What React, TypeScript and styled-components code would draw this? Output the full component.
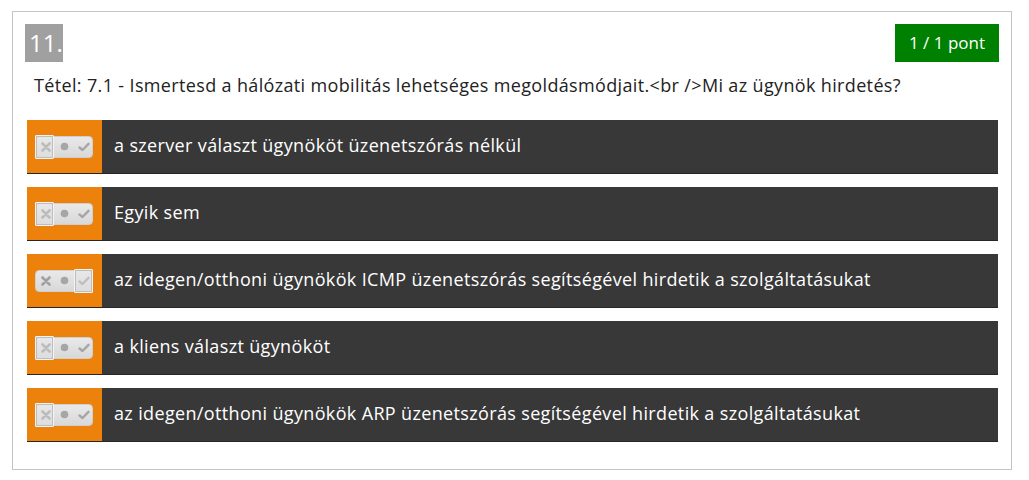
import React from "react";
import styled, { createGlobalStyle } from "styled-components";

const Global = createGlobalStyle`
  html, body { margin: 0; padding: 0; background: #fff; }
  body { font-family: "Open Sans", "Noto Sans", sans-serif; }
`;

const Page = styled.div`
  padding: 11px 17px 0 12px;
`;

const Card = styled.div`
  border: 1px solid #c4c4c4;
  width: 1000px;
  height: 459px;
  box-sizing: border-box;
  padding: 12px 12px 0 12px;
`;

const Header = styled.div`
  display: flex;
  justify-content: space-between;
  align-items: flex-start;
  height: 38px;
`;

const Number = styled.div`
  background: #a0a0a0;
  color: #fff;
  font-size: 24px;
  line-height: 38px;
  height: 38px;
  padding: 0 4px 0 4px;
  box-sizing: border-box;
  width: 38px;
`;

const Points = styled.div`
  background: #008000;
  color: #fff;
  font-size: 17px;
  line-height: 38px;
  height: 38px;
  width: 104px;
  text-align: center;
`;

const Question = styled.div`
  color: #222;
  font-size: 18px;
  letter-spacing: 0.35px;
  line-height: 24px;
  padding: 11px 0 0 9px;
  height: 47px;
`;

const Answers = styled.div`
  display: flex;
  flex-direction: column;
  gap: 13px;
  padding: 0 1px 0 2px;
`;

const Row = styled.div`
  display: flex;
  height: 54px;
  background: #383838;
  border-bottom: 1px solid #262626;
  box-sizing: border-box;
`;

const Marker = styled.div`
  width: 75px;
  background: #ec820c;
  display: flex;
  align-items: center;
  padding-left: 8px;
  box-sizing: border-box;
`;

const Label = styled.div`
  color: #fff;
  font-size: 18px;
  letter-spacing: 0.35px;
  display: flex;
  align-items: center;
  padding: 0 0 3px 12px;
`;

const Toggle = styled.div`
  position: relative;
  width: 58px;
  height: 22px;
  border-radius: 4px;
  background: linear-gradient(#e9e9e9, #d8d8d8);
  border: 1px solid #cfcfcf;
  box-sizing: border-box;
  display: grid;
  grid-template-columns: 19px 19px 20px;
  align-items: center;
  justify-items: center;
`;

const Sel = styled.div<{ $pos: number }>`
  position: absolute;
  top: -2px;
  left: ${(p) => (p.$pos === 0 ? -1 : 38)}px;
  width: 19px;
  height: 24px;
  border: 1px solid #f4f4f4;
  box-shadow: 0 0 0 1px #bdbdbd inset;
  box-sizing: border-box;
  border-radius: 1px;
  background: rgba(230, 230, 230, 0.4);
`;

const Cross = () => (
  <svg width="10" height="10" viewBox="0 0 10 10">
    <path d="M1.5 1.5 L8.5 8.5 M8.5 1.5 L1.5 8.5" stroke="#a0a0a0" strokeWidth="2.6" strokeLinecap="round" />
  </svg>
);
const Dot = () => (
  <svg width="9" height="9" viewBox="0 0 9 9">
    <circle cx="4.5" cy="4.5" r="3.8" fill="#a6a6a6" />
  </svg>
);
const Check = () => (
  <svg width="12" height="10" viewBox="0 0 12 10">
    <path d="M1.5 5.5 L4.5 8 L10.5 1.8" stroke="#a6a6a6" strokeWidth="2.4" fill="none" strokeLinecap="round" strokeLinejoin="round" />
  </svg>
);

const answers: { text: string; sel: number }[] = [
  { text: "a szerver választ ügynököt üzenetszórás nélkül", sel: 0 },
  { text: "Egyik sem", sel: 0 },
  { text: "az idegen/otthoni ügynökök ICMP üzenetszórás segítségével hirdetik a szolgáltatásukat", sel: 2 },
  { text: "a kliens választ ügynököt", sel: 0 },
  { text: "az idegen/otthoni ügynökök ARP üzenetszórás segítségével hirdetik a szolgáltatásukat", sel: 0 },
];

export default function App() {
  return (
    <>
      <Global />
      <Page>
        <Card>
          <Header>
            <Number>11.</Number>
            <Points>1 / 1 pont</Points>
          </Header>
          <Question>
            Tétel: 7.1 - Ismertesd a hálózati mobilitás lehetséges megoldásmódjait.&lt;br /&gt;Mi az ügynök hirdetés?
          </Question>
          <Answers>
            {answers.map((a, i) => (
              <Row key={i}>
                <Marker>
                  <Toggle>
                    <Cross />
                    <Dot />
                    <Check />
                    <Sel $pos={a.sel} />
                  </Toggle>
                </Marker>
                <Label>{a.text}</Label>
              </Row>
            ))}
          </Answers>
        </Card>
      </Page>
    </>
  );
}
